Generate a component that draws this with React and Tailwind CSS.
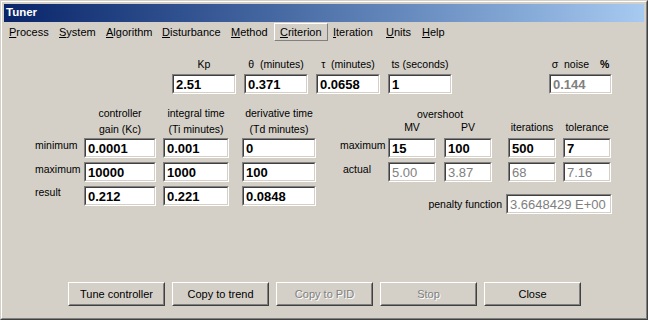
import React from "react";

const font = { fontFamily: '"Liberation Sans", Arial, sans-serif' };

const Field = ({ value, w, gray, bold = true }) => (
  <div className={`${w} h-[20px] shrink-0 border border-t-[#808080] border-l-[#808080] border-r-white border-b-white`}>
    <div className="h-full border border-t-[#404040] border-l-[#404040] border-r-[#d4d0c8] border-b-[#d4d0c8] bg-white flex items-center pl-[2px] overflow-hidden">
      <span
        className={`text-[13px] leading-none whitespace-nowrap ${bold ? "font-bold" : "font-normal"} ${gray ? "text-[#808080]" : "text-black"}`}
      >
        {value}
      </span>
    </div>
  </div>
);

const Button = ({ label, disabled }) => (
  <div className="w-[97px] h-[24px] border border-t-white border-l-white border-r-[#404040] border-b-[#404040]">
    <div className="h-full border border-t-[#d4d0c8] border-l-[#d4d0c8] border-r-[#808080] border-b-[#808080] flex items-center justify-center">
      <span
        className={`text-[11px] leading-none ${disabled ? "text-[#808080] [text-shadow:1px_1px_0_#ffffff]" : "text-black"}`}
      >
        {label}
      </span>
    </div>
  </div>
);

const MenuItem = ({ first, rest, w, active }) => (
  <div
    className={`${w} h-[18px] flex items-center pl-[5px] text-[11px] leading-none ${
      active
        ? "border border-t-white border-l-white border-r-[#808080] border-b-[#808080] pl-[4px]"
        : ""
    }`}
  >
    <span>
      <u>{first}</u>
      {rest}
    </span>
  </div>
);

const Label = ({ children, cls = "" }) => (
  <div className={`text-[10.5px] leading-[13px] text-black whitespace-nowrap ${cls}`}>{children}</div>
);

export default function App() {
  return (
    <div style={font} className="w-[648px] h-[320px] bg-[#d4d0c8] border border-t-[#d4d0c8] border-l-[#d4d0c8] border-r-[#404040] border-b-[#404040]">
      <div className="h-full border border-t-white border-l-white border-r-[#808080] border-b-[#808080] p-[2px] flex flex-col">
        {/* title bar */}
        <div className="h-[18px] shrink-0 bg-gradient-to-r from-[#0a246a] to-[#a6caf0] flex items-center pl-[2px]">
          <span className="text-white font-bold text-[11.5px] leading-none">Tuner</span>
        </div>

        {/* menu */}
        <div className="h-[19px] shrink-0 flex pt-[1px]">
          <MenuItem first="P" rest="rocess" w="w-[50px]" />
          <MenuItem first="S" rest="ystem" w="w-[47px]" />
          <MenuItem first="A" rest="lgorithm" w="w-[56px]" />
          <MenuItem first="D" rest="isturbance" w="w-[69px]" />
          <MenuItem first="M" rest="ethod" w="w-[48px]" />
          <MenuItem first="C" rest="riterion" w="w-[54px]" active />
          <MenuItem first="I" rest="teration" w="w-[53px]" />
          <MenuItem first="U" rest="nits" w="w-[36px]" />
          <MenuItem first="H" rest="elp" w="w-[30px]" />
        </div>

        {/* process parameters */}
        <div className="flex mt-[17px] ml-[168px]">
          <div className="flex gap-[8px]">
            <div className="flex flex-col items-center">
              <Label>Kp</Label>
              <div className="mt-[3px]"><Field value="2.51" w="w-[64px]" /></div>
            </div>
            <div className="flex flex-col items-center">
              <Label>θ &nbsp;(minutes)</Label>
              <div className="mt-[3px]"><Field value="0.371" w="w-[64px]" /></div>
            </div>
            <div className="flex flex-col items-center">
              <Label>τ &nbsp;(minutes)</Label>
              <div className="mt-[3px]"><Field value="0.0658" w="w-[64px]" /></div>
            </div>
            <div className="flex flex-col items-center">
              <Label>ts (seconds)</Label>
              <div className="mt-[3px]"><Field value="1" w="w-[64px]" /></div>
            </div>
          </div>
          <div className="flex flex-col items-center ml-[97px]">
            <Label>
              σ &nbsp;noise <span className="font-bold ml-[8px]">%</span>
            </Label>
            <div className="mt-[3px]"><Field value="0.144" w="w-[63px]" gray /></div>
          </div>
        </div>

        {/* grids */}
        <div className="flex mt-[11px] ml-[31px]">
          {/* controller grid */}
          <div className="flex flex-col">
            <div className="flex h-[33px]">
              <div className="w-[49px]" />
              <div className="w-[72px] text-center text-[10.5px] leading-[16px]">controller<br />gain (Kc)</div>
              <div className="w-[66px] ml-[7px] text-center text-[10.5px] leading-[16px] whitespace-nowrap">integral time<br />(Ti minutes)</div>
              <div className="w-[74px] ml-[13px] text-center text-[10.5px] leading-[16px] whitespace-nowrap">derivative time<br />(Td minutes)</div>
            </div>
            {[
              ["minimum", "0.0001", "0.001", "0", "pt-[1px]"],
              ["maximum", "10000", "1000", "100", "pt-[1px]"],
              ["result", "0.212", "0.221", "0.0848", "pt-0"],
            ].map(([lab, a, b, c, pt], i) => (
              <div key={lab} className={`flex items-start h-[20px] ${i === 0 ? "" : "mt-[4px]"}`}>
                <Label cls={`w-[49px] ${pt}`}>{lab}</Label>
                <Field value={a} w="w-[72px]" />
                <div className="ml-[7px]"><Field value={b} w="w-[66px]" /></div>
                <div className="ml-[13px]"><Field value={c} w="w-[74px]" /></div>
              </div>
            ))}
          </div>

          {/* overshoot grid */}
          <div className="flex flex-col ml-[24px] w-[272px]">
            <div className="flex h-[33px] pt-[3px] text-[10.5px] leading-[13px]">
              <div className="w-[48px]" />
              <div className="w-[104px] flex flex-col">
                <div className="text-center">overshoot</div>
                <div className="flex gap-[8px]">
                  <div className="w-[48px] text-center">MV</div>
                  <div className="w-[48px] text-center">PV</div>
                </div>
              </div>
              <div className="w-[48px] ml-[16px] pt-[13px] text-center whitespace-nowrap">iterations</div>
              <div className="w-[48px] ml-[7px] pt-[13px] text-center whitespace-nowrap">tolerance</div>
            </div>
            <div className="flex items-start h-[20px]">
              <Label cls="w-[48px] pt-[1px]">maximum</Label>
              <Field value="15" w="w-[48px]" />
              <div className="ml-[8px]"><Field value="100" w="w-[48px]" /></div>
              <div className="ml-[16px]"><Field value="500" w="w-[48px]" /></div>
              <div className="ml-[7px]"><Field value="7" w="w-[48px]" /></div>
            </div>
            <div className="flex items-start h-[20px] mt-[4px]">
              <Label cls="w-[48px] pt-[1px] pl-[3px]">actual</Label>
              <Field value="5.00" w="w-[48px]" gray bold={false} />
              <div className="ml-[8px]"><Field value="3.87" w="w-[48px]" gray bold={false} /></div>
              <div className="ml-[16px]"><Field value="68" w="w-[48px]" gray bold={false} /></div>
              <div className="ml-[7px]"><Field value="7.16" w="w-[48px]" gray bold={false} /></div>
            </div>
            <div className="flex items-center justify-end mt-[12px]">
              <Label>penalty function</Label>
              <div className="ml-[4px]"><Field value="3.6648429 E+00" w="w-[106px]" gray bold={false} /></div>
            </div>
          </div>
        </div>

        {/* buttons */}
        <div className="flex gap-[7px] mt-auto mb-[10px] ml-[64px]">
          <Button label="Tune controller" />
          <Button label="Copy to trend" />
          <Button label="Copy to PID" disabled />
          <Button label="Stop" disabled />
          <Button label="Close" />
        </div>
      </div>
    </div>
  );
}
